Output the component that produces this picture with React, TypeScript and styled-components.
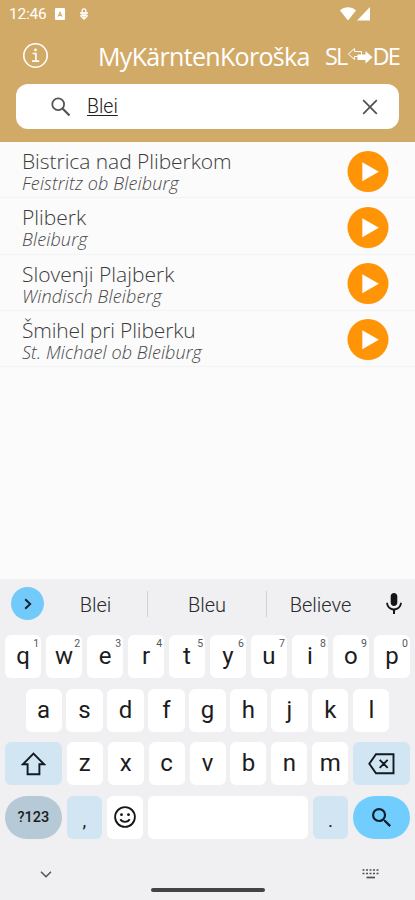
import React from "react";
import styled, { createGlobalStyle } from "styled-components";

const Global = createGlobalStyle`
  * { box-sizing: border-box; }
  html, body { margin: 0; padding: 0; }
  body { width: 415px; height: 900px; overflow: hidden; background: #fbfbfb; }
  svg { display: block; flex: none; }
`;

const Screen = styled.div`
  width: 415px;
  height: 900px;
  display: flex;
  flex-direction: column;
  background: #fbfbfb;
  font-family: "Roboto", sans-serif;
  overflow: hidden;
`;

const Header = styled.header`
  height: 142px;
  flex: none;
  background: #d2aa67;
  color: #fff;
`;

const StatusBar = styled.div`
  height: 28px;
  padding: 0 45px 0 9px;
  display: flex;
  align-items: center;
  justify-content: space-between;
`;

const StatusGroup = styled.div<{ $gap: number }>`
  display: flex;
  align-items: center;
  gap: ${(p) => p.$gap}px;
`;

const Clock = styled.span`
  width: 37px;
  margin-right: -2px;
  font-size: 15.5px;
  letter-spacing: -0.2px;
  line-height: 28px;
`;

const TitleBar = styled.div`
  height: 56px;
  padding: 0 15px 0 23px;
  display: flex;
  align-items: center;
`;

const Title = styled.h1<{ $tracking: number }>`
  margin: 0 0 0 49px;
  width: 227px;
  flex: none;
  font: 400 25px/56px "Open Sans", sans-serif;
  letter-spacing: ${(p) => p.$tracking}px;
  white-space: nowrap;
`;

const Languages = styled.div`
  display: flex;
  align-items: center;
  font: 400 23.5px/54px "Open Sans", sans-serif;
  letter-spacing: -1.8px;
  white-space: nowrap;
  height: 54px;
`;

const SearchBox = styled.div`
  height: 45px;
  margin: 0 16px;
  padding: 0 21px 0 35px;
  display: flex;
  align-items: center;
  border-radius: 12px;
  background: #fff;
`;

const Query = styled.span`
  flex: 1;
  margin-left: 16px;
  font-size: 19.5px;
  line-height: 46px;
  font-weight: 300;
  color: #222;
  text-decoration: underline;
  text-decoration-thickness: 1px;
  text-underline-offset: 2px;
`;

const Results = styled.ul`
  flex: 1;
  margin: 0;
  padding: 0;
  list-style: none;
`;

const Result = styled.li`
  height: 56.25px;
  padding: 2px 26px 0 22px;
  display: flex;
  align-items: center;
  justify-content: space-between;
  border-bottom: 1px solid #f3f3f3;
  font-family: "Open Sans", sans-serif;
  font-weight: 300;
  white-space: nowrap;
`;

const Labels = styled.div`
  padding-top: 3px;
`;

const Place = styled.div<{ $tracking: number }>`
  font-size: 21px;
  line-height: 22px;
  letter-spacing: ${(p) => p.$tracking}px;
  color: #3c3c3c;
`;

const Translation = styled.div<{ $tracking: number }>`
  font-size: 18px;
  line-height: 22px;
  letter-spacing: ${(p) => p.$tracking}px;
  font-style: italic;
  color: #484848;
`;

const Keyboard = styled.section`
  height: 321px;
  flex: none;
  background: #f0f0f2;
  color: #1b1c1e;
`;

const Suggestions = styled.div`
  height: 56px;
  padding: 0 13px 7px 11px;
  display: flex;
  align-items: center;
`;

const Expand = styled.div`
  width: 33px;
  height: 33px;
  flex: none;
  display: grid;
  place-items: center;
  border-radius: 50%;
  background: #72cafa;
`;

const Suggestion = styled.div<{ $width: number; $divided?: boolean }>`
  width: ${(p) => p.$width}px;
  height: 26px;
  flex: none;
  text-align: center;
  font-size: 20px;
  line-height: 28px;
  font-weight: 300;
  color: #292a2c;
  border-right: ${(p) => (p.$divided ? "1px solid #d2d2d5" : "0")};
`;

const VoiceInput = styled.div`
  margin-left: auto;
`;

const KeyGrid = styled.div`
  padding: 0 5px;
  display: grid;
  gap: 10.5px;
`;

const KeyRow = styled.div<{ $inset?: number }>`
  height: 43px;
  padding: 0 ${(p) => p.$inset ?? 0}px;
  display: flex;
  gap: 4.9px;
`;

const Key = styled.div<{ $grow?: number; $tone?: string; $pill?: boolean }>`
  position: relative;
  flex: ${(p) => p.$grow ?? 36} 1 0;
  display: flex;
  align-items: center;
  justify-content: center;
  border-radius: ${(p) => (p.$pill ? 22 : 6)}px;
  background: ${(p) => p.$tone ?? "#fff"};
  font-size: 24px;
  line-height: 43px;
  font-weight: 400;
`;

const Hint = styled.sup`
  position: absolute;
  top: 3px;
  right: 2px;
  font-size: 10.5px;
  line-height: 11px;
  color: #55575a;
`;

const ModeLabel = styled.span`
  font-size: 14.5px;
  font-weight: 500;
`;

const Punctuation = styled.span`
  font-size: 19px;
  padding-top: 7px;
`;

const NavBar = styled.div`
  height: 60px;
  padding: 10px 36px 0 40px;
  display: flex;
  align-items: center;
  justify-content: space-between;
`;

const HomeHandle = styled.div`
  width: 114px;
  height: 4px;
  margin: 32px 0 0 1px;
  border-radius: 2px;
  background: #434345;
`;

const InfoIcon = () => (
  <svg width="26" height="26" viewBox="0 0 26 26" fill="none" stroke="#fff" strokeWidth="1.6">
    <circle cx="12.5" cy="12.5" r="11.7" />
    <path d="M9.6 10.500h3.300v7.500M9 18.100h7.200" />
    <circle cx="12.5" cy="6.900" r="1.3" fill="#fff" stroke="none" />
  </svg>
);

const AppBadgeIcon = () => (
  <svg width="10" height="12" viewBox="0 0 10 12">
    <rect width="10" height="12" rx="1" fill="#fff" />
    <path d="M5 3 2.6 8.4h1.2L5 5.8l1.2 2.6h1.2z" fill="#d2aa67" />
    <path d="M4 7h2v1H4z" fill="#d2aa67" />
  </svg>
);

const DebugIcon = () => (
  <svg width="10" height="13" viewBox="0 0 10 13" fill="none" stroke="#fff" strokeWidth="1.3">
    <path d="M3.200 4.800V2.600a1.800 1.800 0 0 1 3.600 0v2.200M1 5h8M1.200 7.400 5 11.200l3.800-3.800M5 5v5M3 5v2.500h4V5" />
  </svg>
);

const WifiIcon = () => (
  <svg width="16" height="14" viewBox="0 0 16 14">
    <path d="M0 3.500C4.700-.8 11.300-.8 16 3.500L8 13.500z" fill="#fff" />
  </svg>
);

const SignalIcon = () => (
  <svg width="13" height="14" viewBox="0 0 13 14">
    <path d="M13 0v13.500H0z" fill="#fff" />
  </svg>
);

const SwapIcon = () => (
  <svg width="26" height="18" viewBox="0 0 26 18">
    <path d="M1.300 7 7.500 1.500v3h7v5h-7v3z" fill="none" stroke="#fff" strokeWidth="1" />
    <path d="M10.500 7.500h8V4l7 6.200-7 6.300V13h-8z" fill="#fff" />
  </svg>
);

const SearchOutlineIcon = () => (
  <svg width="20" height="20" viewBox="0 0 20 20" fill="none" stroke="#555" strokeWidth="1.800">
    <circle cx="7.200" cy="7.200" r="5.900" />
    <path d="m11.500 11.500 7 7" strokeWidth="2.300" />
  </svg>
);

const SearchKeyIcon = () => (
  <svg width="19" height="19" viewBox="3 3 17.5 17.5">
    <path
      fill="#0d1d29"
      d="M15.5 14h-.79l-.28-.27A6.47 6.47 0 0 0 16 9.5 6.5 6.5 0 1 0 9.5 16c1.61 0 3.09-.59 4.23-1.57l.27.28v.79l5 4.99L20.49 19zm-6 0a4.5 4.5 0 1 1 0-9 4.5 4.5 0 0 1 0 9z"
    />
  </svg>
);

const CloseIcon = () => (
  <svg width="16" height="16" viewBox="0 0 16 16" stroke="#505050" strokeWidth="1.7">
    <path d="m1.2 1.2 13.6 13.6M14.8 1.2 1.2 14.8" />
  </svg>
);

const PlayIcon = () => (
  <svg width="42" height="42" viewBox="0 0 42 42">
    <circle cx="21" cy="21.500" r="20.500" fill="#ff9407" />
    <path d="m15.300 12.200 16.500 9.500-16.500 9.500z" fill="#fff" />
  </svg>
);

const ChevronIcon = () => (
  <svg width="10" height="12" viewBox="0 0 10 12" fill="none" stroke="#12202a" strokeWidth="1.9">
    <path d="m2.2 1.2 5 4.8-5 4.8" />
  </svg>
);

const MicIcon = () => (
  <svg width="16" height="21" viewBox="4 1 16 21" preserveAspectRatio="none">
    <path
      fill="#151515"
      d="M12 14c1.9 0 3.3-1.4 3.3-3.2V4.3C15.300 2.500 13.900 1 12 1S8.700 2.500 8.700 4.300v6.500C8.700 12.600 10.100 14 12 14zm6-3.200c0 3.400-2.800 5.700-6 5.700s-6-2.300-6-5.700H4.200c0 3.900 3 7 6.800 7.600V22h2v-3.600c3.800-.6 6.800-3.700 6.800-7.600z"
    />
  </svg>
);

const ShiftIcon = () => (
  <svg width="25" height="24" viewBox="0 0 25 24" fill="none" stroke="#111a21" strokeWidth="1.9">
    <path d="M12.500 1.600 23 12.200h-4.600v10H6.600v-10H2z" />
  </svg>
);

const BackspaceIcon = () => (
  <svg width="27" height="22" viewBox="0 0 27 22" fill="none" stroke="#111a21" strokeWidth="1.900">
    <path d="M8 1.300h17.500v19H8L1.300 10.800zM11.700 6.800l8 8M19.700 6.800l-8 8" />
  </svg>
);

const SmileyIcon = () => (
  <svg width="22" height="22" viewBox="0 0 22 22" fill="none" stroke="#151515" strokeWidth="1.800">
    <circle cx="11" cy="11" r="9.900" />
    <path d="M6.300 13.300c1.800 3.300 7.600 3.300 9.400 0" />
    <circle cx="7.500" cy="8.700" r="1.400" fill="#151515" stroke="none" />
    <circle cx="14.500" cy="8.700" r="1.400" fill="#151515" stroke="none" />
  </svg>
);

const CollapseIcon = () => (
  <svg width="12" height="8" viewBox="0 0 12 8" fill="none" stroke="#505052" strokeWidth="1.400">
    <path d="m1 1.700 5 5 5-5" />
  </svg>
);

const KeyboardIcon = () => (
  <svg width="17" height="11" viewBox="0 0 17 11" fill="none" stroke="#505052" strokeWidth="1.700">
    <path d="M.5 2h16M.5 5.500h16" strokeDasharray="2 1.500" />
    <path d="M4.500 9.500h8.500" />
  </svg>
);

const results = [
  { name: "Bistrica nad Pliberkom", german: "Feistritz ob Bleiburg", nt: -0.05, gt: 0.15 },
  { name: "Pliberk", german: "Bleiburg", nt: 0, gt: 0.15 },
  { name: "Slovenji Plajberk", german: "Windisch Bleiberg", nt: 0, gt: 0.15 },
  { name: "Šmihel pri Pliberku", german: "St. Michael ob Bleiburg", nt: -0.15, gt: 0.1 },
];

const PALE = "#d1e5f2";

export default function App() {
  return (
    <Screen>
      <Global />
      <Header>
        <StatusBar>
          <StatusGroup $gap={11}>
            <Clock>12:46</Clock>
            <StatusGroup $gap={14}>
              <AppBadgeIcon />
              <DebugIcon />
            </StatusGroup>
          </StatusGroup>
          <StatusGroup $gap={1}>
            <WifiIcon />
            <SignalIcon />
          </StatusGroup>
        </StatusBar>
        <TitleBar>
          <InfoIcon />
          <Title $tracking={-0.68}>MyKärntenKoroška</Title>
          <Languages>
            SL
            <SwapIcon />
            DE
          </Languages>
        </TitleBar>
        <SearchBox>
          <SearchOutlineIcon />
          <Query>Blei</Query>
          <CloseIcon />
        </SearchBox>
      </Header>
      <Results>
        {results.map((r) => (
          <Result key={r.name}>
            <Labels>
              <Place $tracking={r.nt}>{r.name}</Place>
              <Translation $tracking={r.gt}>{r.german}</Translation>
            </Labels>
            <PlayIcon />
          </Result>
        ))}
      </Results>
      <Keyboard>
        <Suggestions>
          <Expand>
            <ChevronIcon />
          </Expand>
          <Suggestion $width={104} $divided>
            Blei
          </Suggestion>
          <Suggestion $width={119} $divided>
            Bleu
          </Suggestion>
          <Suggestion $width={107}>Believe</Suggestion>
          <VoiceInput>
            <MicIcon />
          </VoiceInput>
        </Suggestions>
        <KeyGrid>
          <KeyRow>
            {[..."qwertyuiop"].map((k, i) => (
              <Key key={k}>
                {k}
                <Hint>{(i + 1) % 10}</Hint>
              </Key>
            ))}
          </KeyRow>
          <KeyRow $inset={20.5}>
            {[..."asdfghjkl"].map((k) => (
              <Key key={k}>{k}</Key>
            ))}
          </KeyRow>
          <KeyRow>
            <Key $grow={56.8} $tone={PALE}>
              <ShiftIcon />
            </Key>
            {[..."zxcvbnm"].map((k) => (
              <Key key={k}>{k}</Key>
            ))}
            <Key $grow={56.8} $tone={PALE}>
              <BackspaceIcon />
            </Key>
          </KeyRow>
          <KeyRow>
            <Key $grow={56.8} $tone="#b5cad6" $pill>
              <ModeLabel>?123</ModeLabel>
            </Key>
            <Key $tone={PALE}>
              <Punctuation>,</Punctuation>
            </Key>
            <Key>
              <SmileyIcon />
            </Key>
            <Key $grow={160} />
            <Key $tone={PALE}>
              <Punctuation>.</Punctuation>
            </Key>
            <Key $grow={56.8} $tone="#72cdff" $pill>
              <SearchKeyIcon />
            </Key>
          </KeyRow>
        </KeyGrid>
        <NavBar>
          <CollapseIcon />
          <HomeHandle />
          <KeyboardIcon />
        </NavBar>
      </Keyboard>
    </Screen>
  );
}
